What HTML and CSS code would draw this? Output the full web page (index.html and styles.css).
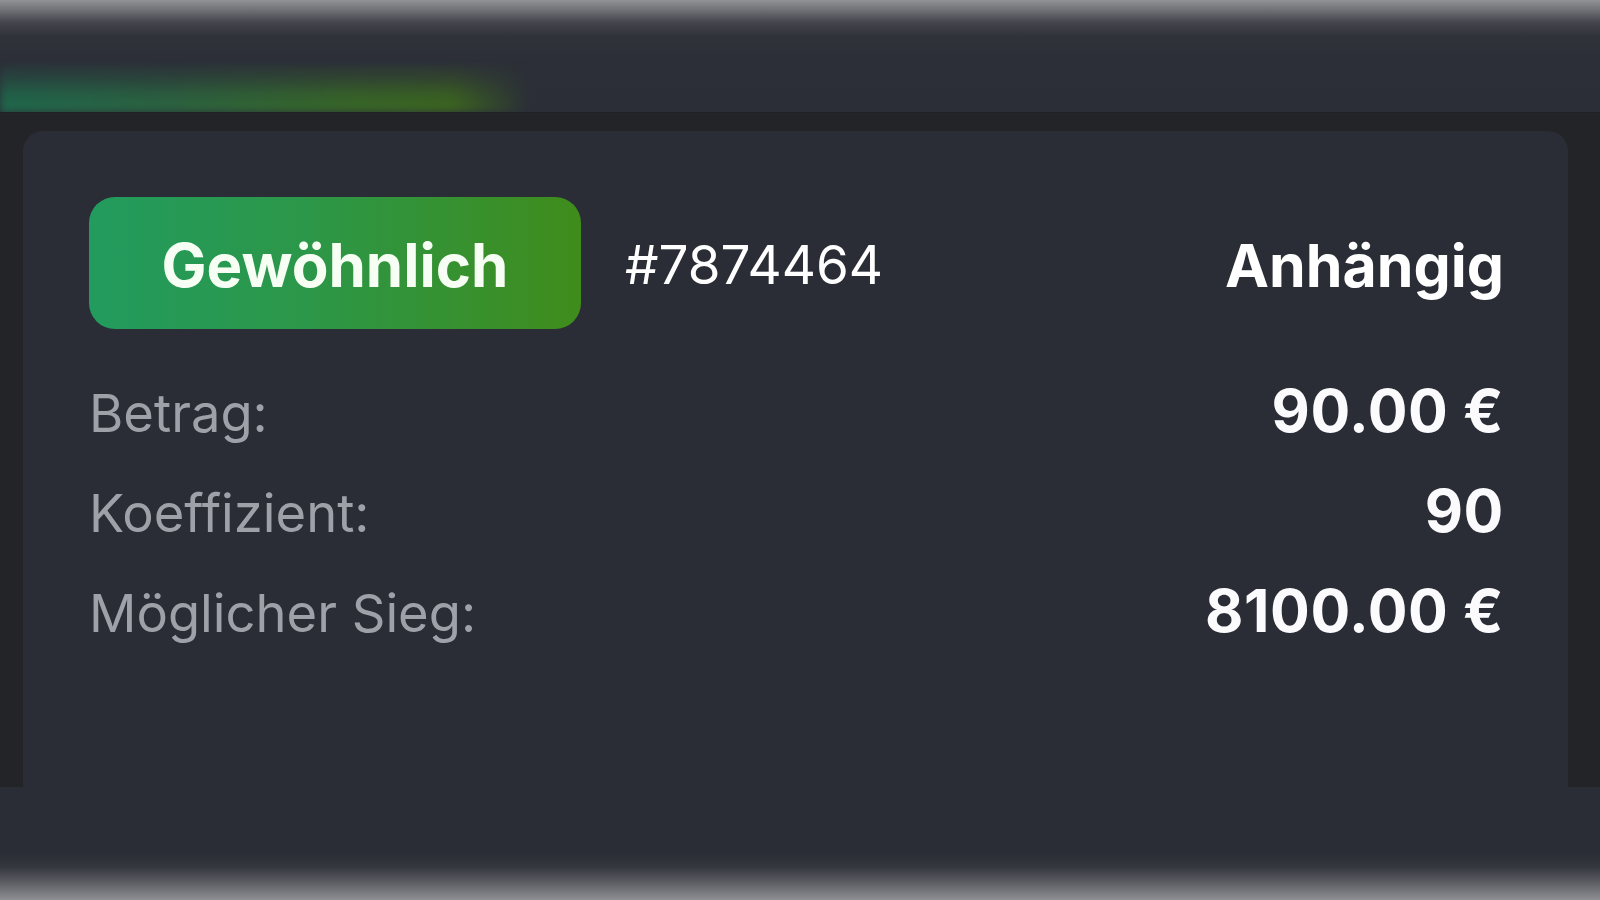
FILE: index.html
```html
<!DOCTYPE html>
<html lang="de">
<head>
<meta charset="utf-8">
<title>Wette</title>
<link rel="stylesheet" href="styles.css">
</head>
<body>
<div class="screen">
  <header class="top-band">
    <div class="glow"></div>
  </header>
  <main class="main">
    <section class="card">
      <div class="card-head">
        <div class="badge">Gewöhnlich</div>
        <div class="bet-id">#7874464</div>
        <div class="status">Anhängig</div>
      </div>
      <div class="rows">
        <div class="row"><span class="label">Betrag:</span><span class="value">90.00 €</span></div>
        <div class="row"><span class="label">Koeffizient:</span><span class="value">90</span></div>
        <div class="row"><span class="label">Möglicher Sieg:</span><span class="value">8100.00 €</span></div>
      </div>
    </section>
  </main>
  <footer class="bottom-band"></footer>
</div>
</body>
</html>
```

FILE: styles.css
```css
* { box-sizing: border-box; }
html, body { margin: 0; padding: 0; }
body {
  width: 1600px;
  height: 900px;
  overflow: hidden;
  background: #232427;
  font-family: Inter, "Noto Sans", "Liberation Sans", sans-serif;
  color: #fff;
}
.screen {
  display: flex;
  flex-direction: column;
  width: 1600px;
  height: 900px;
}
.top-band {
  height: 113px;
  flex: none;
  display: flex;
  align-items: flex-end;
  background: linear-gradient(to bottom, #929296 0px, #707176 10px, #45464d 22px, #30323a 36px, #2c2f38 60px, #2b2e37 113px);
  border-bottom: 1px solid #1f2022;
}
.glow {
  width: 530px;
  height: 52px;
  background: linear-gradient(90deg, #1e6e4e 0%, #2a6842 30%, #386c26 65%, #3d6a1e 85%, rgba(60,106,30,0) 100%);
  -webkit-mask-image: linear-gradient(to top, #000 0%, rgba(0,0,0,0.75) 35%, rgba(0,0,0,0.3) 70%, transparent 100%);
  mask-image: linear-gradient(to top, #000 0%, rgba(0,0,0,0.75) 35%, rgba(0,0,0,0.3) 70%, transparent 100%);
  filter: blur(4px);
}
.main {
  flex: none;
  height: 674px;
  display: flex;
  padding: 18px 32px 0 23px;
  background: #232427;
}
.card {
  flex: 1;
  background: #2a2d36;
  border-radius: 20px 20px 0 0;
  padding: 66px 64px 0 66px;
}
.card-head {
  display: flex;
  align-items: center;
  height: 132px;
}
.badge {
  width: 492px;
  height: 132px;
  border-radius: 26px;
  background: linear-gradient(90deg, #229b5e 0%, #2c9748 45%, #3f8c1b 100%);
  display: flex;
  align-items: center;
  justify-content: center;
  font-size: 60px;
  font-weight: 700;
  color: #f7fff5;
  padding-top: 4px;
}
.bet-id {
  margin-left: 44px;
  font-size: 53px;
  font-weight: 400;
  padding-top: 4px;
}
.status {
  margin-left: auto;
  font-size: 59px;
  font-weight: 700;
  padding-top: 4px;
}
.rows {
  padding-top: 32px;
}
.row {
  display: flex;
  justify-content: space-between;
  align-items: baseline;
  height: 100px;
  line-height: 100px;
}
.label {
  font-size: 52.5px;
  color: #9fa1a9;
}
.value {
  font-size: 59px;
  font-weight: 700;
  letter-spacing: 0.6px;
  color: #fbfbfd;
}
.bottom-band {
  flex: 1;
  background: linear-gradient(to bottom, #2a2d35 0px, #2a2d35 66px, #35373e 80px, #5e5f65 96px, #8e8e93 113px);
}
```
